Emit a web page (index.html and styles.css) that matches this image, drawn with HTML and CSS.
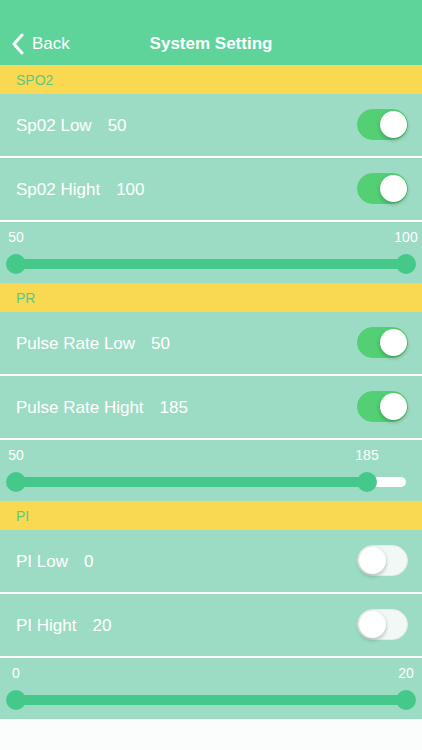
FILE: index.html
```html
<!DOCTYPE html>
<html lang="en">

<head>
  <meta charset="UTF-8">
  <meta name="viewport" content="width=device-width, initial-scale=1.0">
  <title>System Setting</title>
  <link rel="stylesheet" href="styles.css">
</head>

<body>
  <header class="nav-bar">
    <div class="back">
      <svg class="chevron" width="14" height="22" viewBox="0 0 14 22">
        <path d="M11 2 L3 11 L11 20" fill="none" stroke="#ffffff" stroke-width="3" stroke-linecap="round" stroke-linejoin="round" />
      </svg>
      <span>Back</span>
    </div>
    <h1 class="title">System Setting</h1>
  </header>

  <main>
    <!-- SPO2 -->
    <div class="section-title">SPO2</div>
    <div class="row">
      <span class="label">Sp02 Low</span><span class="value">50</span>
      <div class="switch on"><div class="knob"></div></div>
    </div>
    <div class="row">
      <span class="label">Sp02 Hight</span><span class="value">100</span>
      <div class="switch on"><div class="knob"></div></div>
    </div>
    <div class="slider">
      <div class="track">
        <div class="fill" style="left: 0%; width: 100%;"></div>
        <span class="tick" style="left: 0%;">50</span>
        <span class="tick" style="left: 100%;">100</span>
        <div class="thumb" style="left: 0%;"></div>
        <div class="thumb" style="left: 100%;"></div>
      </div>
    </div>

    <!-- PR -->
    <div class="section-title">PR</div>
    <div class="row">
      <span class="label">Pulse Rate Low</span><span class="value">50</span>
      <div class="switch on"><div class="knob"></div></div>
    </div>
    <div class="row">
      <span class="label">Pulse Rate Hight</span><span class="value">185</span>
      <div class="switch on"><div class="knob"></div></div>
    </div>
    <div class="slider">
      <div class="track">
        <div class="fill" style="left: 0%; width: 90%;"></div>
        <span class="tick" style="left: 0%;">50</span>
        <span class="tick" style="left: 90%;">185</span>
        <div class="thumb" style="left: 0%;"></div>
        <div class="thumb" style="left: 90%;"></div>
      </div>
    </div>

    <!-- PI -->
    <div class="section-title">PI</div>
    <div class="row">
      <span class="label">PI Low</span><span class="value">0</span>
      <div class="switch"><div class="knob"></div></div>
    </div>
    <div class="row">
      <span class="label">PI Hight</span><span class="value">20</span>
      <div class="switch"><div class="knob"></div></div>
    </div>
    <div class="slider">
      <div class="track">
        <div class="fill" style="left: 0%; width: 100%;"></div>
        <span class="tick" style="left: 0%;">0</span>
        <span class="tick" style="left: 100%;">20</span>
        <div class="thumb" style="left: 0%;"></div>
        <div class="thumb" style="left: 100%;"></div>
      </div>
    </div>
  </main>
</body>

</html>
```

FILE: styles.css
```css
body {
  font-family: "Liberation Sans", Arial, sans-serif;
  background-color: #fbfdfd;
  margin: 0;
  padding: 0;
  color: #ffffff;
}

.nav-bar {
  height: 65px;
  background-color: #5ed39a;
  display: flex;
  align-items: flex-end;
  justify-content: center;
  position: relative;
  box-sizing: border-box;
  padding-bottom: 10px;
}

.back {
  position: absolute;
  left: 11px;
  bottom: 10px;
  display: flex;
  align-items: center;
  font-size: 17px;
}

.chevron {
  margin-right: 7px;
}

.title {
  margin: 0;
  font-size: 17px;
  font-weight: bold;
  line-height: 22px;
}

.section-title {
  height: 29px;
  background-color: #f9d852;
  color: #5bc97f;
  font-size: 14px;
  line-height: 30px;
  padding-left: 16px;
}

.row {
  height: 60px;
  background-color: #9ddcc4;
  display: flex;
  align-items: center;
  padding: 2px 14px 0 16px;
  border-bottom: 2px solid #ffffff;
  font-size: 17px;
}

.value {
  margin-left: 16px;
}

.switch {
  margin-left: auto;
  margin-top: -3px;
  width: 51px;
  height: 31px;
  border-radius: 16px;
  box-sizing: border-box;
  background-color: #f1f8f5;
  border: 1.5px solid #e3ebe8;
  position: relative;
}

.switch.on {
  background-color: #52d073;
  border-color: #52d073;
}

.knob {
  position: absolute;
  top: 0.5px;
  left: 0.5px;
  width: 27px;
  height: 27px;
  border-radius: 50%;
  background-color: #ffffff;
  box-shadow: 0 2px 4px rgba(0, 0, 0, 0.25);
}

.switch.on .knob {
  left: auto;
  right: 0.5px;
}

.slider {
  height: 61px;
  background-color: #9ddcc4;
  padding: 0 16px;
  display: flex;
  align-items: flex-end;
}

.track {
  position: relative;
  width: 100%;
  height: 10px;
  border-radius: 5px;
  background-color: #ffffff;
  margin-bottom: 14px;
}

.fill {
  position: absolute;
  top: 0;
  height: 10px;
  background-color: #45c98a;
}

.thumb {
  position: absolute;
  top: -5px;
  width: 20px;
  height: 20px;
  margin-left: -10px;
  border-radius: 50%;
  background-color: #45c98a;
}

.tick {
  position: absolute;
  top: -30px;
  font-size: 14px;
  transform: translateX(-50%);
}
```
